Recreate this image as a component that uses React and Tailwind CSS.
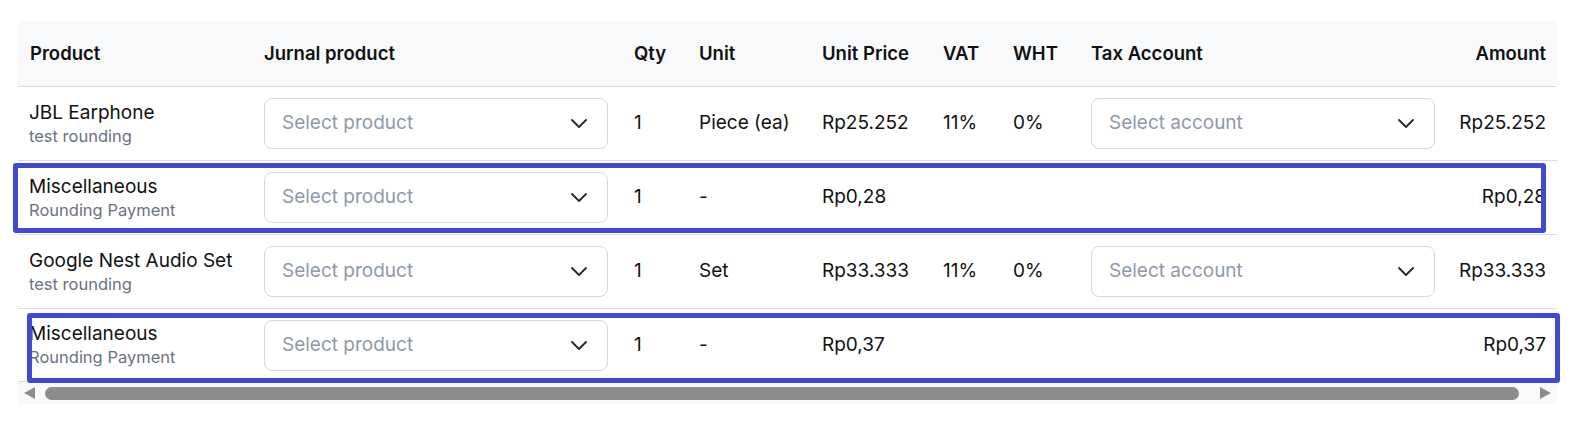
const rows = [
  { name: 'JBL Earphone', sub: 'test rounding', qty: '1', unit: 'Piece (ea)', price: 'Rp25.252', vat: '11%', wht: '0%', tax: true, amount: 'Rp25.252' },
  { name: 'Miscellaneous', sub: 'Rounding Payment', qty: '1', unit: '-', price: 'Rp0,28', vat: '', wht: '', tax: false, amount: 'Rp0,28' },
  { name: 'Google Nest Audio Set', sub: 'test rounding', qty: '1', unit: 'Set', price: 'Rp33.333', vat: '11%', wht: '0%', tax: true, amount: 'Rp33.333' },
  { name: 'Miscellaneous', sub: 'Rounding Payment', qty: '1', unit: '-', price: 'Rp0,37', vat: '', wht: '', tax: false, amount: 'Rp0,37' },
];

const cols = 'grid grid-cols-[234px_370px_65px_123px_121px_70px_78px_370px_108px] items-center';

const Chevron = () => (
  <svg width="16" height="9" viewBox="0 0 16 9" fill="none">
    <path d="M1 1l7 7 7-7" stroke="#1f2937" strokeWidth="1.8" strokeLinecap="round" strokeLinejoin="round" />
  </svg>
);

const Select = ({ placeholder }) => (
  <div className="h-[51px] w-[344px] rounded-lg border border-[#d4d8e0] bg-white flex items-center justify-between pl-[17px] pr-[20px]">
    <span className="text-[19px] text-[#8f99aa]">{placeholder}</span>
    <Chevron />
  </div>
);

const App = () => {
  return (
    <div className="bg-white min-h-screen pl-[18px] pt-[21px] font-['Inter',sans-serif] text-[#111111]">
      <div className="relative w-[1539px]">
        {/* header */}
        <div className={`${cols} h-[65px] bg-[#f8f9fb] text-[18.5px] font-semibold`}>
          <div className="pl-3">Product</div>
          <div className="pl-3">Jurnal product</div>
          <div className="pl-3">Qty</div>
          <div className="pl-3">Unit</div>
          <div className="pl-3">Unit Price</div>
          <div className="pl-3">VAT</div>
          <div className="pl-3">WHT</div>
          <div className="pl-3">Tax Account</div>
          <div className="pr-[11px] text-right">Amount</div>
        </div>

        {/* body */}
        {rows.map((r, i) => (
          <div key={i} className={`${cols} h-[74px] border-t border-[#d8dce3] text-[19px] ${i === rows.length - 1 ? 'border-b' : ''}`}>
            <div className="pl-[11px]">
              <div className="leading-[24px]">{r.name}</div>
              <div className="text-[16.5px] leading-[22px] text-[#6b7280]">{r.sub}</div>
            </div>
            <div className="pl-3">
              <Select placeholder="Select product" />
            </div>
            <div className="pl-3">{r.qty}</div>
            <div className="pl-3">{r.unit}</div>
            <div className="pl-3">{r.price}</div>
            <div className="pl-3">{r.vat}</div>
            <div className="pl-3">{r.wht}</div>
            <div className="pl-3">{r.tax && <Select placeholder="Select account" />}</div>
            <div className="pr-[11px] text-right whitespace-nowrap">{r.amount}</div>
          </div>
        ))}

        {/* fake scrollbar */}
        <div className="h-[22px] bg-[#f9f9f9] flex items-center px-[6px] gap-[10px]">
          <div className="w-0 h-0 border-y-[6px] border-y-transparent border-r-[11px] border-r-[#8c8c8c]" />
          <div className="flex-1 h-[13px] rounded-full bg-[#8c8c8c] mr-[11px]" />
          <div className="w-0 h-0 border-y-[6px] border-y-transparent border-l-[11px] border-l-[#8c8c8c]" />
        </div>

        {/* annotation boxes */}
        <div className="absolute left-[-5px] top-[142px] w-[1533px] h-[70px] border-[5px] border-[#4349cf] rounded-[3px] pointer-events-none" />
        <div className="absolute left-[9px] top-[292px] w-[1533px] h-[70px] border-[5px] border-[#4349cf] rounded-[3px] pointer-events-none" />
      </div>
    </div>
  );
};

export default App;
